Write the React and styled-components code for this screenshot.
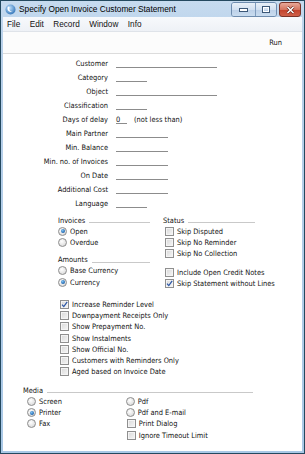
import React from 'react';
import styled, { createGlobalStyle } from 'styled-components';

const GlobalStyle = createGlobalStyle`
  html, body { margin: 0; padding: 0; background: #fff; }
  body {
    font-family: "DejaVu Sans Condensed", "DejaVu Sans", sans-serif;
    color: #111;
  }
`;

const Window = styled.div`
  width: 305px;
  height: 454px;
  box-sizing: border-box;
  border: 1px solid #24495f;
  background: linear-gradient(#c6dbef, #b9d1ea 40px, #a9c8e6);
  padding: 0 2px 2px;
  display: flex;
  flex-direction: column;
  overflow: hidden;
`;

const TitleBar = styled.div`
  height: 16px;
  display: flex;
  align-items: center;
  padding-left: 2px;
  font-family: "Liberation Sans", Arial, sans-serif;
  font-size: 8.3px;
  color: #000;
`;

const TitleText = styled.span`
  margin-left: 3px;
  flex: 1;
`;

const ButtonGroup = styled.div`
  display: flex;
  height: 13px;
  margin-top: 1px;
  align-self: flex-start;
  border: 1px solid #6e8cae;
  border-radius: 3px;
  overflow: hidden;
  margin-right: 2px;
`;

const CaptionButton = styled.div`
  width: ${p => p.$w}px;
  height: 100%;
  display: flex;
  align-items: center;
  justify-content: center;
  background: linear-gradient(#e9f0f8, #d2e0f0 50%, #bcd0e8 51%, #c9dcef);
  & + & { border-left: 1px solid #7f9cbd; }
`;

const CloseButton = styled.div`
  width: 20px;
  height: 13px;
  margin-top: 1px;
  align-self: flex-start;
  margin-right: 1px;
  border: 1px solid #7b3328;
  border-radius: 3px;
  display: flex;
  align-items: center;
  justify-content: center;
  background: linear-gradient(#e8a899, #d47560 50%, #c2402a 51%, #d0614a);
`;

const Client = styled.div`
  flex: 1;
  background: #fff;
  display: flex;
  flex-direction: column;
`;

const MenuBar = styled.div`
  height: 14px;
  display: flex;
  align-items: center;
  background: linear-gradient(#f7f9fc, #eef1f6);
  border-bottom: 1px solid #dfe3e9;
  font-family: "Liberation Sans", Arial, sans-serif;
  font-size: 8.2px;
`;

const MenuItem = styled.span`
  padding: 0 5px 0 4px;
  margin-right: 0.5px;
`;

const Toolbar = styled.div`
  height: 21px;
  display: flex;
  align-items: center;
  justify-content: flex-end;
  padding-right: 20px;
  background: #fcfcfc;
  border-bottom: 1px solid #dcdcdc;
  font-size: 7.4px;
`;

const Form = styled.div`
  flex: 1;
  font-size: 7.4px;
`;

const FieldGrid = styled.div`
  display: grid;
  grid-template-columns: 105px auto;
  column-gap: 8px;
  grid-auto-rows: 14px;
  padding-top: 3px;
`;

const Label = styled.div`
  text-align: right;
  line-height: 14px;
  white-space: nowrap;
`;

const FieldCell = styled.div`
  display: flex;
  align-items: flex-start;
  line-height: 14px;
`;

const Field = styled.div`
  width: ${p => p.$w}px;
  height: 10px;
  line-height: 14px;
  border-bottom: 1px solid #8c8c8c;
`;

const Hint = styled.span`
  margin-left: 7px;
`;

const Options = styled.div`
  display: flex;
  gap: 13px;
  margin-top: 3.5px;
  padding-left: 55px;
`;

const Column = styled.div`
  width: ${p => p.$w || 92}px;
  display: flex;
  flex-direction: column;
`;

const SectionHead = styled.div`
  height: 11px;
  display: flex;
  line-height: 11px;
`;

const Rule = styled.div`
  flex: 1;
  margin: 0 0 2.5px 4px;
  border-bottom: 1px solid #c9c9c9;
`;

const Spacer = styled.div`
  height: ${p => p.$h}px;
`;

const Item = styled.div`
  height: ${p => p.$h || 11.3}px;
  display: flex;
  align-items: center;
  padding-left: ${p => p.$indent || 0}px;
  white-space: nowrap;
`;

const RadioBox = styled.span`
  width: 7px;
  height: 7px;
  margin-right: 3px;
  border-radius: 50%;
  border: 1px solid #8d8d8d;
  background: radial-gradient(circle at 40% 35%, #ffffff, #e4e4e4 60%, #cfcfcf);
  display: flex;
  align-items: center;
  justify-content: center;
  flex-shrink: 0;
  &::after {
    content: '';
    display: ${p => (p.$on ? 'block' : 'none')};
    width: 4px;
    height: 4px;
    border-radius: 50%;
    background: radial-gradient(circle at 40% 35%, #7fc1f0, #1f66b0 70%, #17457c);
  }
`;

const CheckBox = styled.span`
  width: 7px;
  height: 7px;
  margin-right: 3px;
  border: 1px solid #8f8f8f;
  box-shadow: inset 0 0 0 1px #f4f4f4;
  background: linear-gradient(135deg, #d8d8d8, #f6f6f6);
  display: flex;
  align-items: center;
  justify-content: center;
  flex-shrink: 0;
`;

const LowerList = styled.div`
  display: flex;
  flex-direction: column;
  margin-top: 9.5px;
  padding-left: 57px;
`;

const Media = styled.div`
  margin-top: 7px;
  padding-left: 20px;
  width: 230px;
`;

const MediaCols = styled.div`
  display: flex;
  padding-left: 4px;
`;

const Radio = ({ on, children }) => (
  <Item>
    <RadioBox $on={on} />
    {children}
  </Item>
);

const Check = ({ on, children, indent }) => (
  <Item $indent={indent}>
    <CheckBox>
      {on && (
        <svg width="7" height="7" viewBox="0 0 7 7">
          <path d="M1 3.6 L2.8 5.6 L6.2 0.8" fill="none" stroke="#2b56a6" strokeWidth="1.2" />
        </svg>
      )}
    </CheckBox>
    {children}
  </Item>
);

const AppIcon = () => (
  <svg width="11" height="11" viewBox="0 0 11 11">
    <defs>
      <radialGradient id="ic" cx="40%" cy="35%" r="70%">
        <stop offset="0" stopColor="#bfe0fb" />
        <stop offset="1" stopColor="#2f73b8" />
      </radialGradient>
    </defs>
    <circle cx="5.5" cy="5.5" r="5" fill="url(#ic)" />
    <path d="M3 2.5 C1.6 5 3.2 8.6 7.8 8 C5 7.6 3.6 5.5 4.6 3 Z" fill="#fff" />
  </svg>
);

const fields = [
  ['Customer', 101],
  ['Category', 31],
  ['Object', 101],
  ['Classification', 31],
  ['Days of delay', 'delay'],
  ['Main Partner', 52],
  ['Min. Balance', 52],
  ['Min. no. of Invoices', 52],
  ['On Date', 52],
  ['Additional Cost', 52],
  ['Language', 31],
];

const lowerChecks = [
  ['Increase Reminder Level', true],
  ['Downpayment Receipts Only', false],
  ['Show Prepayment No.', false],
  ['Show Instalments', false],
  ['Show Official No.', false],
  ['Customers with Reminders Only', false],
  ['Aged based on Invoice Date', false],
];

export default function App() {
  return (
    <>
      <GlobalStyle />
      <Window>
        <TitleBar>
          <AppIcon />
          <TitleText>Specify Open Invoice Customer Statement</TitleText>
          <ButtonGroup>
            <CaptionButton $w={23}>
              <svg width="9" height="4" viewBox="0 0 9 4">
                <rect x="0.5" y="0.5" width="8" height="3" fill="#fff" stroke="#3c5878" />
              </svg>
            </CaptionButton>
            <CaptionButton $w={20}>
              <svg width="8" height="7" viewBox="0 0 8 7">
                <rect x="0.5" y="0.5" width="7" height="6" fill="none" stroke="#3c5878" />
                <rect x="1.5" y="1.5" width="5" height="4" fill="none" stroke="#fff" />
              </svg>
            </CaptionButton>
          </ButtonGroup>
          <CloseButton>
            <svg width="9" height="8" viewBox="0 0 9 8">
              <path d="M1.5 1 L7.5 7 M7.5 1 L1.5 7" stroke="#5a1a12" strokeWidth="2.6" />
              <path d="M1.5 1 L7.5 7 M7.5 1 L1.5 7" stroke="#fff" strokeWidth="1.6" />
            </svg>
          </CloseButton>
        </TitleBar>
        <Client>
          <MenuBar>
            <MenuItem>File</MenuItem>
            <MenuItem>Edit</MenuItem>
            <MenuItem>Record</MenuItem>
            <MenuItem>Window</MenuItem>
            <MenuItem>Info</MenuItem>
          </MenuBar>
          <Toolbar>Run</Toolbar>
          <Form>
            <FieldGrid>
              {fields.map(([label, w]) => (
                <React.Fragment key={label}>
                  <Label>{label}</Label>
                  <FieldCell>
                    {w === 'delay' ? (
                      <>
                        <Field $w={11}>0</Field>
                        <Hint>(not less than)</Hint>
                      </>
                    ) : (
                      <Field $w={w} />
                    )}
                  </FieldCell>
                </React.Fragment>
              ))}
            </FieldGrid>

            <Options>
              <Column>
                <SectionHead>Invoices<Rule /></SectionHead>
                <Radio on>Open</Radio>
                <Radio>Overdue</Radio>
                <Spacer $h={6} />
                <SectionHead>Amounts<Rule /></SectionHead>
                <Radio>Base Currency</Radio>
                <Radio on>Currency</Radio>
              </Column>
              <Column>
                <SectionHead>Status<Rule /></SectionHead>
                <Check indent={2}>Skip Disputed</Check>
                <Check indent={2}>Skip No Reminder</Check>
                <Check indent={2}>Skip No Collection</Check>
                <Spacer $h={7} />
                <Check indent={2}>Include Open Credit Notes</Check>
                <Check indent={2} on>Skip Statement without Lines</Check>
              </Column>
            </Options>

            <LowerList>
              {lowerChecks.map(([text, on]) => (
                <Check key={text} on={on}>{text}</Check>
              ))}
            </LowerList>

            <Media>
              <SectionHead>Media<Rule /></SectionHead>
              <MediaCols>
                <Column $w={101}>
                  <Radio>Screen</Radio>
                  <Radio on>Printer</Radio>
                  <Radio>Fax</Radio>
                </Column>
                <Column $w={130}>
                  <Radio>Pdf</Radio>
                  <Radio>Pdf and E-mail</Radio>
                  <Check indent={1}>Print Dialog</Check>
                  <Check indent={1}>Ignore Timeout Limit</Check>
                </Column>
              </MediaCols>
            </Media>
          </Form>
        </Client>
      </Window>
    </>
  );
}
